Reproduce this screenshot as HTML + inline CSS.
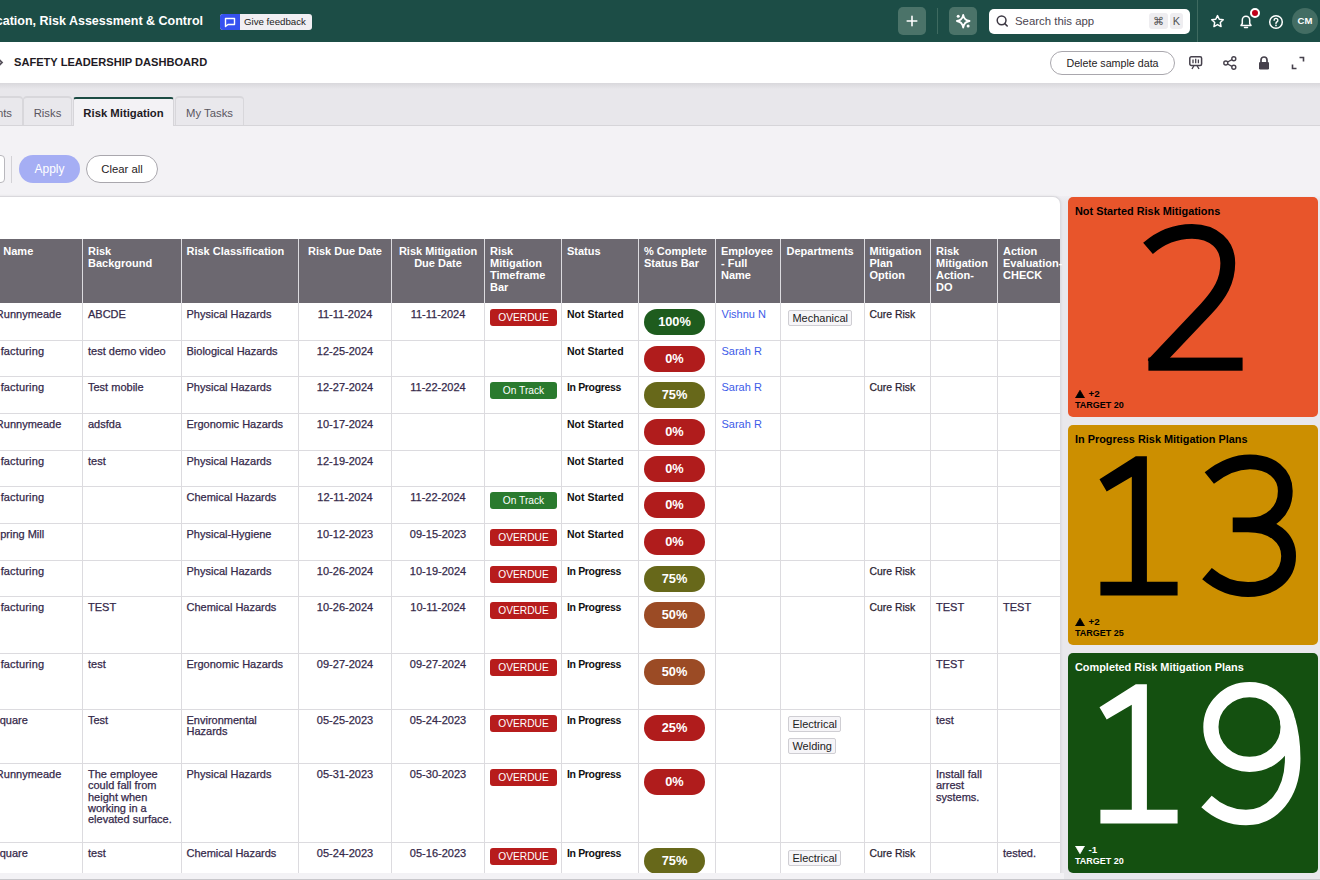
<!DOCTYPE html><html><head><meta charset="utf-8"><style>
*{margin:0;padding:0;box-sizing:border-box}
html,body{width:1320px;height:880px;overflow:hidden;background:#f3f2f5;font-family:"Liberation Sans", sans-serif;}
.a{position:absolute;white-space:nowrap}
.t{position:absolute;white-space:nowrap;font-size:11px;line-height:12px;color:#35294a;-webkit-text-stroke:0.25px #35294a}
.hd{position:absolute;font-size:11px;line-height:12px;color:#fff;font-weight:bold}
.vl{position:absolute;width:1px;background:#dcdbdf}
.hl{position:absolute;height:1px;background:#dcdbdf}
.badge{position:absolute;width:67px;height:17px;border-radius:3px;color:#fff;font-size:10.2px;line-height:17px;text-align:center}
.pill{position:absolute;width:61px;height:26px;border-radius:13px;color:#fff;font-size:12.8px;font-weight:bold;line-height:25px;text-align:center}
.tag{position:absolute;height:16px;border:1px solid #cfced3;background:#f6f5f8;border-radius:2px;font-size:11px;line-height:14px;color:#222;padding:0 3.4px}
.st{position:absolute;white-space:nowrap;font-size:10.5px;line-height:12px;color:#111;font-weight:bold}
.lnk{position:absolute;white-space:nowrap;font-size:11px;line-height:12px;color:#3d5be8}
</style></head><body>
<div class="a" style="left:0;top:0;width:1320px;height:42px;background:#1c4d46"></div>
<div class="a" style="left:-20px;top:14px;width:223px;text-align:right;font-size:12.5px;line-height:14px;font-weight:bold;color:#fff">cation, Risk Assessment &amp; Control</div>
<div class="a" style="left:220px;top:14px;width:92px;height:16px;border-radius:3px;background:#f1eff3;overflow:hidden"><div class="a" style="left:0;top:0;width:20px;height:16px;background:#3651f0"></div><svg class="a" style="left:4px;top:3px" width="12" height="11" viewBox="0 0 12 11"><path d="M1.5 1.5h9v6h-6.5l-2.5 2v-8z" fill="none" stroke="#fff" stroke-width="1.4" stroke-linejoin="round"/></svg><div class="a" style="left:24px;top:2px;font-size:9.7px;line-height:12px;color:#222">Give feedback</div></div>
<div class="a" style="left:898px;top:7px;width:28px;height:28px;border-radius:5px;background:#4b7369"></div>
<svg class="a" style="left:905px;top:14px" width="14" height="14" viewBox="0 0 14 14"><path d="M7 2.2v9.6M2.2 7h9.6" stroke="#fff" stroke-width="1.6" stroke-linecap="round"/></svg>
<div class="a" style="left:937px;top:8px;width:1px;height:26px;background:#3e6a60"></div>
<div class="a" style="left:949px;top:7px;width:28px;height:28px;border-radius:5px;background:#4b7369"></div>
<svg class="a" style="left:955px;top:13px" width="18" height="18" viewBox="0 0 18 18"><path d="M8.2 1.8 Q9.1 7.1 14.5 8 Q9.1 8.9 8.2 14.6 Q7.3 8.9 1.9 8 Q7.3 7.1 8.2 1.8z" fill="none" stroke="#fff" stroke-width="1.8" stroke-linejoin="round"/><circle cx="3.2" cy="3.2" r="1.5" fill="#fff"/><circle cx="13.1" cy="13.1" r="1.5" fill="#fff"/></svg>
<div class="a" style="left:989px;top:9px;width:201px;height:25px;border-radius:5px;background:#fff"></div>
<svg class="a" style="left:995px;top:14px" width="15" height="15" viewBox="0 0 15 15"><circle cx="6.6" cy="6.3" r="4.4" fill="none" stroke="#3d3843" stroke-width="1.5"/><path d="M9.8 9.6l2.4 2.4" stroke="#3d3843" stroke-width="1.6" stroke-linecap="round"/></svg>
<div class="a" style="left:1015px;top:14px;font-size:11.4px;line-height:14px;color:#4a4550">Search this app</div>
<div class="a" style="left:1149px;top:13px;width:19px;height:16px;border-radius:3px;background:#eeedf0;color:#555;font-size:11px;line-height:16px;text-align:center">&#8984;</div>
<div class="a" style="left:1170px;top:13px;width:13px;height:16px;border-radius:3px;background:#eeedf0;color:#555;font-size:11px;line-height:16px;text-align:center">K</div>
<div class="a" style="left:1197px;top:0;width:1px;height:42px;background:#3e6a60"></div>
<svg class="a" style="left:1210px;top:14px" width="15" height="15" viewBox="0 0 15 15"><path d="M7.5 1.6l1.75 3.7 4 .5-2.95 2.75.75 4L7.5 10.6 3.95 12.55l.75-4L1.75 5.8l4-.5z" fill="none" stroke="#fff" stroke-width="1.5" stroke-linejoin="round"/></svg>
<svg class="a" style="left:1238px;top:13px" width="16" height="17" viewBox="0 0 16 17"><path d="M3 12.5h10l-1.3-2V7a3.7 3.7 0 0 0-7.4 0v3.5z" fill="none" stroke="#fff" stroke-width="1.5" stroke-linejoin="round"/><path d="M6.5 14.6h3" stroke="#fff" stroke-width="1.5" stroke-linecap="round"/></svg>
<div class="a" style="left:1250px;top:7.5px;width:10px;height:10px;border-radius:50%;background:#c0001a;border:2px solid #fff"></div>
<svg class="a" style="left:1268px;top:13.5px" width="16" height="16" viewBox="0 0 16 16"><circle cx="8" cy="8" r="6.3" fill="none" stroke="#fff" stroke-width="1.5"/><path d="M6.1 6.3a1.9 1.9 0 1 1 2.7 1.7c-.6.3-.8.6-.8 1.2v.3" fill="none" stroke="#fff" stroke-width="1.4" stroke-linecap="round"/><circle cx="8" cy="11.4" r=".85" fill="#fff"/></svg>
<div class="a" style="left:1292px;top:8px;width:26px;height:26px;border-radius:50%;background:#436d63;color:#fff;font-size:9.5px;font-weight:bold;line-height:26px;text-align:center">CM</div>
<div class="a" style="left:0;top:42px;width:1320px;height:41px;background:#fff"></div>
<svg class="a" style="left:-3px;top:58px" width="8" height="9" viewBox="0 0 8 9"><path d="M1.5 1l3.5 3.5-3.5 3.5" fill="none" stroke="#57525c" stroke-width="1.8"/></svg>
<div class="a" style="left:14px;top:56px;font-size:11.1px;line-height:13px;font-weight:bold;color:#1f1b24">SAFETY LEADERSHIP DASHBOARD</div>
<div class="a" style="left:1050px;top:51px;width:125px;height:24px;border-radius:12px;border:1px solid #a9a7ad;background:#fff;font-size:10.7px;line-height:22px;text-align:center;color:#1f1b24">Delete sample data</div>
<svg class="a" style="left:1187px;top:54px" width="17" height="17" viewBox="0 0 17 17"><rect x="2.8" y="2.8" width="11.8" height="8.6" rx="1.5" fill="none" stroke="#46414c" stroke-width="1.5"/><path d="M6 9.2V5.5M8.7 9.2V4.8M11.4 9.2V5.5" stroke="#46414c" stroke-width="1.3"/><path d="M5 15l2-3.5M12 15l-2-3.5" stroke="#46414c" stroke-width="1.4"/></svg>
<svg class="a" style="left:1222px;top:55px" width="16" height="16" viewBox="0 0 16 16"><circle cx="11.8" cy="3.8" r="2" fill="none" stroke="#46414c" stroke-width="1.4"/><circle cx="3.8" cy="8" r="2" fill="none" stroke="#46414c" stroke-width="1.4"/><circle cx="11.8" cy="12.2" r="2" fill="none" stroke="#46414c" stroke-width="1.4"/><path d="M5.6 7l4.4-2.3M5.6 9l4.4 2.3" stroke="#46414c" stroke-width="1.4"/></svg>
<svg class="a" style="left:1257px;top:55px" width="14" height="16" viewBox="0 0 14 16"><path d="M4 7V5a3 3 0 0 1 6 0v2" fill="none" stroke="#46414c" stroke-width="1.7"/><rect x="2" y="7" width="10" height="7.5" rx="1.3" fill="#46414c"/></svg>
<svg class="a" style="left:1290px;top:55px" width="16" height="16" viewBox="0 0 16 16"><path d="M9.5 2.5h4v4M6.5 13.5h-4v-4" fill="none" stroke="#46414c" stroke-width="1.6"/></svg>
<div class="a" style="left:0;top:83px;width:1320px;height:43px;background:#e8e7eb"></div>
<div class="a" style="left:0;top:83px;width:1320px;height:6px;background:linear-gradient(#d9d8dc,#e8e7eb)"></div>
<div class="a" style="left:0;top:125px;width:1320px;height:1px;background:#d6d5d9"></div>
<div class="a" style="left:-40px;top:96px;width:63px;height:29px;background:#e9e8ec;border:1px solid #d8d7db;border-top:2px solid #d8d7db;border-bottom:none;border-radius:4px 4px 0 0"></div>
<div class="a" style="left:-40px;top:105.7px;width:63px;text-align:center;font-size:11.3px;line-height:14px;color:#5a5660"></div>
<div class="a" style="left:-30px;top:105.7px;width:42px;text-align:right;font-size:11.3px;line-height:14px;color:#5a5660">nts</div>
<div class="a" style="left:23px;top:96px;width:49px;height:29px;background:#e9e8ec;border:1px solid #d8d7db;border-top:2px solid #d8d7db;border-bottom:none;border-radius:4px 4px 0 0"></div>
<div class="a" style="left:23px;top:105.7px;width:49px;text-align:center;font-size:11.3px;line-height:14px;color:#5a5660">Risks</div>
<div class="a" style="left:73px;top:97px;width:101px;height:29px;background:#f3f2f5;border-top:2px solid #1c4c44;border-left:1px solid #d6d5d9;border-right:1px solid #d6d5d9;border-radius:3px 3px 0 0"></div>
<div class="a" style="left:73px;top:105.7px;width:101px;text-align:center;font-size:11.3px;line-height:14px;font-weight:bold;color:#1f1b24">Risk Mitigation</div>
<div class="a" style="left:175px;top:96px;width:69px;height:29px;background:#e9e8ec;border:1px solid #d8d7db;border-top:2px solid #d8d7db;border-bottom:none;border-radius:4px 4px 0 0"></div>
<div class="a" style="left:175px;top:105.7px;width:69px;text-align:center;font-size:11.3px;line-height:14px;color:#5a5660">My Tasks</div>
<div class="a" style="left:-20px;top:155px;width:25px;height:28px;border:1px solid #b9b8bd;border-radius:4px;background:#fff"></div>
<div class="a" style="left:11px;top:156px;width:1px;height:27px;background:#d3d2d6"></div>
<div class="a" style="left:19px;top:155px;width:61px;height:28px;border-radius:14px;background:#a5aef4;color:#fff;font-size:12px;line-height:28px;text-align:center">Apply</div>
<div class="a" style="left:86px;top:155px;width:72px;height:28px;border-radius:14px;border:1px solid #a9a7ad;background:#fff;color:#1f1b24;font-size:11.3px;line-height:26px;text-align:center">Clear all</div>
<div class="a" style="left:0;top:196px;width:1320px;height:684px;background:linear-gradient(#efeef2,#e9e8ec 6px)"></div>
<div class="a" style="left:-20px;top:196px;width:1081px;height:677px;background:#fff;border-radius:0 8px 0 0;border-right:1px solid #dddce0;border-top:1px solid #d9d8dc;box-shadow:0 0 3px rgba(0,0,0,0.08)"></div>
<div class="a" style="left:-20px;top:239px;width:1080px;height:64px;background:#6c6870"></div>
<div class="vl" style="left:82px;top:239px;height:634px"></div>
<div class="vl" style="left:181px;top:239px;height:634px"></div>
<div class="vl" style="left:298px;top:239px;height:634px"></div>
<div class="vl" style="left:391px;top:239px;height:634px"></div>
<div class="vl" style="left:484px;top:239px;height:634px"></div>
<div class="vl" style="left:561px;top:239px;height:634px"></div>
<div class="vl" style="left:638px;top:239px;height:634px"></div>
<div class="vl" style="left:715px;top:239px;height:634px"></div>
<div class="vl" style="left:780px;top:239px;height:634px"></div>
<div class="vl" style="left:864px;top:239px;height:634px"></div>
<div class="vl" style="left:930px;top:239px;height:634px"></div>
<div class="vl" style="left:997px;top:239px;height:634px"></div>
<div class="hl" style="left:-20px;top:340px;width:1080px"></div>
<div class="hl" style="left:-20px;top:376px;width:1080px"></div>
<div class="hl" style="left:-20px;top:413px;width:1080px"></div>
<div class="hl" style="left:-20px;top:450px;width:1080px"></div>
<div class="hl" style="left:-20px;top:486px;width:1080px"></div>
<div class="hl" style="left:-20px;top:523px;width:1080px"></div>
<div class="hl" style="left:-20px;top:560px;width:1080px"></div>
<div class="hl" style="left:-20px;top:596px;width:1080px"></div>
<div class="hl" style="left:-20px;top:653px;width:1080px"></div>
<div class="hl" style="left:-20px;top:709px;width:1080px"></div>
<div class="hl" style="left:-20px;top:763px;width:1080px"></div>
<div class="hl" style="left:-20px;top:842px;width:1080px"></div>
<div class="hd" style="left:3.3px;top:245px">Name</div>
<div class="hd" style="left:88px;top:245px">Risk<br>Background</div>
<div class="hd" style="left:186.5px;top:245px">Risk Classification</div>
<div class="hd" style="left:298.5px;width:93.0px;top:245px;text-align:center">Risk Due Date</div>
<div class="hd" style="left:391.5px;width:93.0px;top:245px;text-align:center">Risk Mitigation<br>Due Date</div>
<div class="hd" style="left:490px;top:245px">Risk<br>Mitigation<br>Timeframe<br>Bar</div>
<div class="hd" style="left:567px;top:245px">Status</div>
<div class="hd" style="left:644px;top:245px">% Complete<br>Status Bar</div>
<div class="hd" style="left:721px;top:245px">Employee<br>- Full<br>Name</div>
<div class="hd" style="left:786.5px;top:245px">Departments</div>
<div class="hd" style="left:869.5px;top:245px">Mitigation<br>Plan<br>Option</div>
<div class="hd" style="left:936px;top:245px">Risk<br>Mitigation<br>Action-<br>DO</div>
<div class="hd" style="left:1003px;top:245px">Action<br>Evaluation-<br>CHECK</div>
<div class="t" style="left:-100px;width:161.3px;text-align:right;top:308px">Runnymeade</div>
<div class="t" style="left:88px;top:308.7px;line-height:11.4px">ABCDE</div>
<div class="t" style="left:186.5px;top:308.7px;line-height:11.4px">Physical Hazards</div>
<div class="t" style="left:298.5px;width:93px;text-align:center;top:308px">11-11-2024</div>
<div class="t" style="left:391.5px;width:93px;text-align:center;top:308px">11-11-2024</div>
<div class="badge" style="left:490px;top:308.83px;background:#b71c1c">OVERDUE</div>
<div class="st" style="left:567px;top:308px">Not Started</div>
<div class="pill" style="left:644px;top:308.83px;background:#1e5c1e">100%</div>
<div class="lnk" style="left:721.5px;top:308px">Vishnu N</div>
<div class="tag" style="left:788px;top:310.22999999999996px">Mechanical</div>
<div class="t" style="left:869.5px;top:308.7px;color:#1f1b24;font-size:10.4px">Cure Risk</div>
<div class="t" style="left:-100px;width:144.2px;text-align:right;top:345px;letter-spacing:0.15px">facturing</div>
<div class="t" style="left:88px;top:345.7px;line-height:11.4px">test demo video</div>
<div class="t" style="left:186.5px;top:345.7px;line-height:11.4px">Biological Hazards</div>
<div class="t" style="left:298.5px;width:93px;text-align:center;top:345px">12-25-2024</div>
<div class="st" style="left:567px;top:345px">Not Started</div>
<div class="pill" style="left:644px;top:345.5px;background:#b01c1c">0%</div>
<div class="lnk" style="left:721.5px;top:345px">Sarah R</div>
<div class="t" style="left:-100px;width:144.2px;text-align:right;top:381px;letter-spacing:0.15px">facturing</div>
<div class="t" style="left:88px;top:381.7px;line-height:11.4px">Test mobile</div>
<div class="t" style="left:186.5px;top:381.7px;line-height:11.4px">Physical Hazards</div>
<div class="t" style="left:298.5px;width:93px;text-align:center;top:381px">12-27-2024</div>
<div class="t" style="left:391.5px;width:93px;text-align:center;top:381px">11-22-2024</div>
<div class="badge" style="left:490px;top:382.17px;background:#2a7a2e">On Track</div>
<div class="st" style="left:567px;top:381px;letter-spacing:-0.35px">In Progress</div>
<div class="pill" style="left:644px;top:382.17px;background:#67681a">75%</div>
<div class="lnk" style="left:721.5px;top:381px">Sarah R</div>
<div class="t" style="left:869.5px;top:381.7px;color:#1f1b24;font-size:10.4px">Cure Risk</div>
<div class="t" style="left:-100px;width:161.3px;text-align:right;top:418px">Runnymeade</div>
<div class="t" style="left:88px;top:418.7px;line-height:11.4px">adsfda</div>
<div class="t" style="left:186.5px;top:418.7px;line-height:11.4px">Ergonomic Hazards</div>
<div class="t" style="left:298.5px;width:93px;text-align:center;top:418px">10-17-2024</div>
<div class="st" style="left:567px;top:418px">Not Started</div>
<div class="pill" style="left:644px;top:418.83px;background:#b01c1c">0%</div>
<div class="lnk" style="left:721.5px;top:418px">Sarah R</div>
<div class="t" style="left:-100px;width:144.2px;text-align:right;top:455px;letter-spacing:0.15px">facturing</div>
<div class="t" style="left:88px;top:455.7px;line-height:11.4px">test</div>
<div class="t" style="left:186.5px;top:455.7px;line-height:11.4px">Physical Hazards</div>
<div class="t" style="left:298.5px;width:93px;text-align:center;top:455px">12-19-2024</div>
<div class="st" style="left:567px;top:455px">Not Started</div>
<div class="pill" style="left:644px;top:455.5px;background:#b01c1c">0%</div>
<div class="t" style="left:-100px;width:144.2px;text-align:right;top:491px;letter-spacing:0.15px">facturing</div>
<div class="t" style="left:186.5px;top:491.7px;line-height:11.4px">Chemical Hazards</div>
<div class="t" style="left:298.5px;width:93px;text-align:center;top:491px">12-11-2024</div>
<div class="t" style="left:391.5px;width:93px;text-align:center;top:491px">11-22-2024</div>
<div class="badge" style="left:490px;top:492.17px;background:#2a7a2e">On Track</div>
<div class="st" style="left:567px;top:491px">Not Started</div>
<div class="pill" style="left:644px;top:492.17px;background:#b01c1c">0%</div>
<div class="t" style="left:-100px;width:144.2px;text-align:right;top:528px">pring Mill</div>
<div class="t" style="left:186.5px;top:528.7px;line-height:11.4px">Physical-Hygiene</div>
<div class="t" style="left:298.5px;width:93px;text-align:center;top:528px">10-12-2023</div>
<div class="t" style="left:391.5px;width:93px;text-align:center;top:528px">09-15-2023</div>
<div class="badge" style="left:490px;top:528.83px;background:#b71c1c">OVERDUE</div>
<div class="st" style="left:567px;top:528px">Not Started</div>
<div class="pill" style="left:644px;top:528.83px;background:#b01c1c">0%</div>
<div class="t" style="left:-100px;width:144.2px;text-align:right;top:565px;letter-spacing:0.15px">facturing</div>
<div class="t" style="left:186.5px;top:565.7px;line-height:11.4px">Physical Hazards</div>
<div class="t" style="left:298.5px;width:93px;text-align:center;top:565px">10-26-2024</div>
<div class="t" style="left:391.5px;width:93px;text-align:center;top:565px">10-19-2024</div>
<div class="badge" style="left:490px;top:565.5px;background:#b71c1c">OVERDUE</div>
<div class="st" style="left:567px;top:565px;letter-spacing:-0.35px">In Progress</div>
<div class="pill" style="left:644px;top:565.5px;background:#67681a">75%</div>
<div class="t" style="left:869.5px;top:565.7px;color:#1f1b24;font-size:10.4px">Cure Risk</div>
<div class="t" style="left:-100px;width:144.2px;text-align:right;top:601px;letter-spacing:0.15px">facturing</div>
<div class="t" style="left:88px;top:601.7px;line-height:11.4px">TEST</div>
<div class="t" style="left:186.5px;top:601.7px;line-height:11.4px">Chemical Hazards</div>
<div class="t" style="left:298.5px;width:93px;text-align:center;top:601px">10-26-2024</div>
<div class="t" style="left:391.5px;width:93px;text-align:center;top:601px">10-11-2024</div>
<div class="badge" style="left:490px;top:602.17px;background:#b71c1c">OVERDUE</div>
<div class="st" style="left:567px;top:601px;letter-spacing:-0.35px">In Progress</div>
<div class="pill" style="left:644px;top:602.17px;background:#9b4b25">50%</div>
<div class="t" style="left:869.5px;top:601.7px;color:#1f1b24;font-size:10.4px">Cure Risk</div>
<div class="t" style="left:936px;top:601.7px;line-height:11.4px">TEST</div>
<div class="t" style="left:1003px;top:601px">TEST</div>
<div class="t" style="left:-100px;width:144.2px;text-align:right;top:658px;letter-spacing:0.15px">facturing</div>
<div class="t" style="left:88px;top:658.7px;line-height:11.4px">test</div>
<div class="t" style="left:186.5px;top:658.7px;line-height:11.4px">Ergonomic Hazards</div>
<div class="t" style="left:298.5px;width:93px;text-align:center;top:658px">09-27-2024</div>
<div class="t" style="left:391.5px;width:93px;text-align:center;top:658px">09-27-2024</div>
<div class="badge" style="left:490px;top:658.7px;background:#b71c1c">OVERDUE</div>
<div class="st" style="left:567px;top:658px;letter-spacing:-0.35px">In Progress</div>
<div class="pill" style="left:644px;top:658.7px;background:#9b4b25">50%</div>
<div class="t" style="left:936px;top:658.7px;line-height:11.4px">TEST</div>
<div class="t" style="left:-100px;width:127.9px;text-align:right;top:714px">quare</div>
<div class="t" style="left:88px;top:714.7px;line-height:11.4px">Test</div>
<div class="t" style="left:186.5px;top:714.7px;line-height:11.4px">Environmental<br>Hazards</div>
<div class="t" style="left:298.5px;width:93px;text-align:center;top:714px">05-25-2023</div>
<div class="t" style="left:391.5px;width:93px;text-align:center;top:714px">05-24-2023</div>
<div class="badge" style="left:490px;top:714.7px;background:#b71c1c">OVERDUE</div>
<div class="st" style="left:567px;top:714px;letter-spacing:-0.35px">In Progress</div>
<div class="pill" style="left:644px;top:714.7px;background:#b01c1c">25%</div>
<div class="tag" style="left:788px;top:716.1px">Electrical</div>
<div class="tag" style="left:788px;top:738.1px">Welding</div>
<div class="t" style="left:936px;top:714.7px;line-height:11.4px">test</div>
<div class="t" style="left:-100px;width:161.3px;text-align:right;top:768px">Runnymeade</div>
<div class="t" style="left:88px;top:768.7px;line-height:11.4px">The employee<br>could fall from<br>height when<br>working in a<br>elevated surface.</div>
<div class="t" style="left:186.5px;top:768.7px;line-height:11.4px">Physical Hazards</div>
<div class="t" style="left:298.5px;width:93px;text-align:center;top:768px">05-31-2023</div>
<div class="t" style="left:391.5px;width:93px;text-align:center;top:768px">05-30-2023</div>
<div class="badge" style="left:490px;top:769.3px;background:#b71c1c">OVERDUE</div>
<div class="st" style="left:567px;top:768px;letter-spacing:-0.35px">In Progress</div>
<div class="pill" style="left:644px;top:769.3px;background:#b01c1c">0%</div>
<div class="t" style="left:936px;top:768.7px;line-height:11.4px">Install fall<br>arrest<br>systems.</div>
<div class="t" style="left:-100px;width:127.9px;text-align:right;top:847px">quare</div>
<div class="t" style="left:88px;top:847.7px;line-height:11.4px">test</div>
<div class="t" style="left:186.5px;top:847.7px;line-height:11.4px">Chemical Hazards</div>
<div class="t" style="left:298.5px;width:93px;text-align:center;top:847px">05-24-2023</div>
<div class="t" style="left:391.5px;width:93px;text-align:center;top:847px">05-16-2023</div>
<div class="badge" style="left:490px;top:848.3px;background:#b71c1c">OVERDUE</div>
<div class="st" style="left:567px;top:847px;letter-spacing:-0.35px">In Progress</div>
<div class="pill" style="left:644px;top:848.3px;background:#67681a">75%</div>
<div class="tag" style="left:788px;top:849.6999999999999px">Electrical</div>
<div class="t" style="left:869.5px;top:847.7px;color:#1f1b24;font-size:10.4px">Cure Risk</div>
<div class="t" style="left:1003px;top:847px">tested.</div>
<div class="a" style="left:0;top:872.7px;width:1064px;height:6.3px;background:#f3f2f5"></div>
<div class="a" style="left:0;top:879px;width:1320px;height:1px;background:#c8c7cb"></div>
<div class="a" style="left:1068px;top:197px;width:250px;height:220px;border-radius:5px;background:#e8552b;overflow:hidden">
<div class="a" style="left:7px;top:8px;font-size:10.9px;line-height:13px;font-weight:bold;color:#000">Not Started Risk Mitigations</div>
<svg class="a" style="left:62px;top:18px" width="120" height="160" viewBox="0 0 120 160"><path d="M18,33.3 C31,22 46,16.3 62,16.3 C84,16.3 97.8,30 97.8,48 C97.8,66 90,79 76,94 L23,150" fill="none" stroke="#000" stroke-width="14.8"/><rect x="18.4" y="142.6" width="94.2" height="13.1" fill="#000"/></svg>
<svg class="a" style="left:7px;top:193px" width="10" height="8" viewBox="0 0 10 8"><path d="M0.5 8L5 0.3L9.5 8z" fill="#000" stroke="#000" stroke-width="0.8" stroke-linejoin="round"/></svg>
<div class="a" style="left:20.5px;top:191.6px;font-size:9.8px;line-height:10px;font-weight:bold;color:#000">+2</div>
<div class="a" style="left:7px;top:202.6px;font-size:9px;line-height:10px;font-weight:bold;color:#000">TARGET 20</div>
</div>
<div class="a" style="left:1068px;top:425px;width:250px;height:220px;border-radius:5px;background:#cc8f00;overflow:hidden">
<div class="a" style="left:7px;top:8px;font-size:10.9px;line-height:13px;font-weight:bold;color:#000">In Progress Risk Mitigation Plans</div>
<svg class="a" style="left:22px;top:20px" width="100" height="160" viewBox="0 0 100 160"><path d="M45.8,11.3 L56.9,11.3 L56.9,136.7 L87.6,136.7 L87.6,150.5 L10.4,150.5 L10.4,136.7 L41.8,136.7 L41.8,31.8 L16.7,46.4 L9.5,34.2 Z" fill="#000"/></svg>
<svg class="a" style="left:22px;top:20px" width="220" height="160" viewBox="0 0 220 160"><path d="M119.3,33 C133,22 146,16.8 160,16.8 C181,16.8 195.3,29 195.3,46 C195.3,66 180,79.8 160,79.8 L142.7,79.8 M158,79.8 C183,79.8 198.6,93 198.6,111 C198.6,131 182,144.5 158,144.5 C143,144.5 128,138 117,128.6" fill="none" stroke="#000" stroke-width="14.8"/></svg>
<svg class="a" style="left:7px;top:193px" width="10" height="8" viewBox="0 0 10 8"><path d="M0.5 8L5 0.3L9.5 8z" fill="#000" stroke="#000" stroke-width="0.8" stroke-linejoin="round"/></svg>
<div class="a" style="left:20.5px;top:191.6px;font-size:9.8px;line-height:10px;font-weight:bold;color:#000">+2</div>
<div class="a" style="left:7px;top:202.6px;font-size:9px;line-height:10px;font-weight:bold;color:#000">TARGET 25</div>
</div>
<div class="a" style="left:1068px;top:653px;width:250px;height:220px;border-radius:5px;background:#145010;overflow:hidden">
<div class="a" style="left:7px;top:8px;font-size:10.9px;line-height:13px;font-weight:bold;color:#fff">Completed Risk Mitigation Plans</div>
<svg class="a" style="left:22px;top:20px" width="100" height="160" viewBox="0 0 100 160"><path d="M45.8,11.3 L56.9,11.3 L56.9,136.7 L87.6,136.7 L87.6,150.5 L10.4,150.5 L10.4,136.7 L41.8,136.7 L41.8,31.8 L16.7,46.4 L9.5,34.2 Z" fill="#fff"/></svg>
<svg class="a" style="left:122px;top:17px" width="120" height="160" viewBox="0 0 120 160"><ellipse cx="59.5" cy="57" rx="38.6" ry="37.3" fill="none" stroke="#fff" stroke-width="15.2"/><path d="M97.5,50 C101,62 102.7,75 102.7,88 C102.7,125 82,147.5 56,147.5 C40,147.5 27,141 16.5,131.5" fill="none" stroke="#fff" stroke-width="15.5"/></svg>
<svg class="a" style="left:7px;top:193px" width="10" height="8" viewBox="0 0 10 8"><path d="M0.5 0L9.5 0L5 7.7z" fill="#fff" stroke="#fff" stroke-width="0.8" stroke-linejoin="round"/></svg>
<div class="a" style="left:20.5px;top:191.6px;font-size:9.8px;line-height:10px;font-weight:bold;color:#fff">-1</div>
<div class="a" style="left:7px;top:202.6px;font-size:9px;line-height:10px;font-weight:bold;color:#fff">TARGET 20</div>
</div>
</body></html>
